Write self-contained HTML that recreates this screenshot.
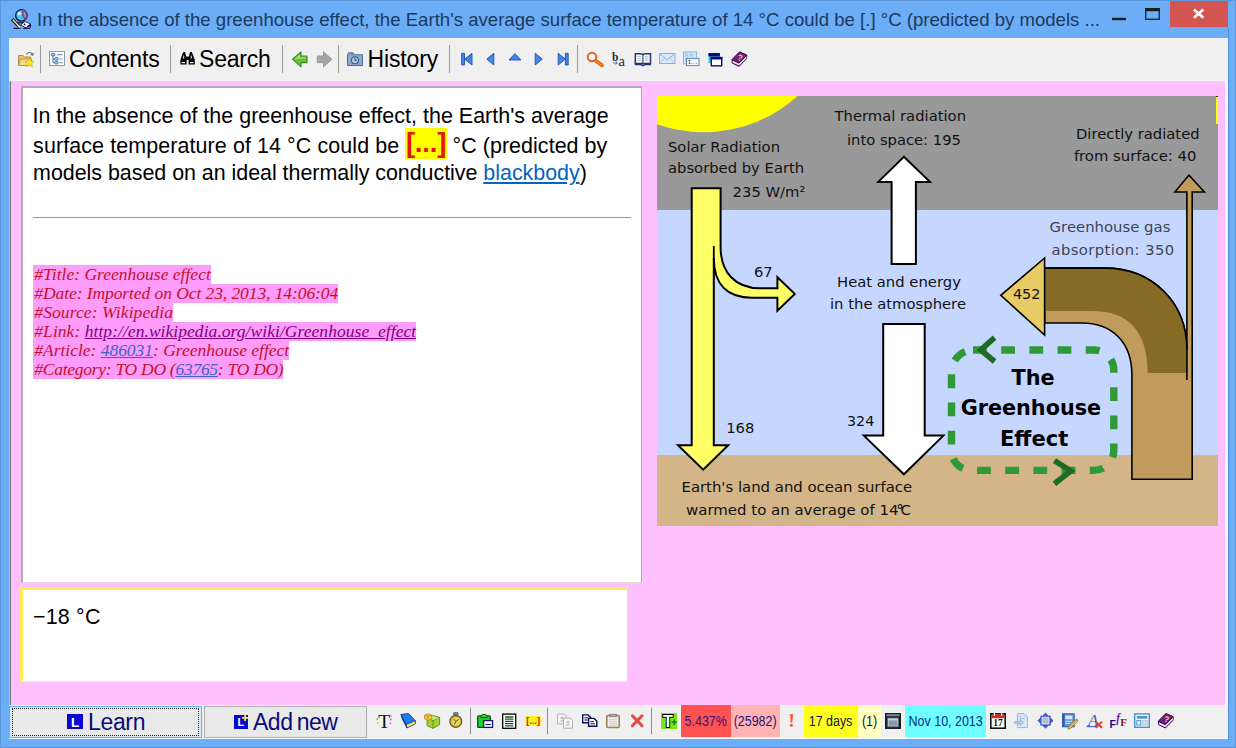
<!DOCTYPE html>
<html lang="en">
<head>
<meta charset="utf-8">
<title>SuperMemo element</title>
<style>
html,body{margin:0;padding:0;}
body{width:1236px;height:748px;overflow:hidden;background:#6badf6;position:relative;font-family:"Liberation Sans",sans-serif;}
.abs{position:absolute;}
#win{left:0;top:0;width:1236px;height:748px;background:#6badf6;box-sizing:border-box;border:1px solid #5a94d6;}
#title{left:37px;top:7.5px;font-size:18.6px;color:#1b3a5e;white-space:nowrap;line-height:24px;}
#tb{left:9px;top:38px;width:1218.5px;height:42px;background:#f0f0f0;}
#tbline{left:9px;top:80px;width:1216px;height:2px;background:linear-gradient(#6c6c6c 50%,#a58ba5 50%);}
#client{left:9px;top:80px;width:1218.5px;height:625px;background:#f6f6f6;}
#pink{left:10px;top:81px;width:1214px;height:624px;background:#ffc0ff;border-left:1px solid #7a7a7a;}
#q{left:21px;top:86px;width:620.5px;height:497px;background:#fff;box-sizing:border-box;border:2px solid #b6aab6;border-right:1.5px solid #aaa;border-bottom:0.5px solid #e8d8e8;}
.qt{font-size:21.45px;color:#000;white-space:nowrap;line-height:25px;}
#a{left:20px;top:586.5px;width:607.6px;height:95.5px;background:#fff;box-sizing:border-box;border:3px solid #ffec50;border-right:1.5px solid #ffea40;border-bottom:1px solid #fff3a0;}
.meta{left:33px;padding-left:1.3px;height:19px;line-height:19px;font-family:"Liberation Serif",serif;font-style:italic;font-size:17.5px;color:#c4102e;background:#fe9cfb;white-space:nowrap;}
.meta a{color:#3b62c8;text-decoration:underline;}
.meta a.v{color:#800080;}
#bb{left:9px;top:705px;width:1218.5px;height:34px;background:#f0f0f0;border-top:1px solid #f9eef9;border-bottom:1px solid #fbfbfb;box-sizing:border-box;}
.btn{top:706px;height:32px;box-sizing:border-box;background:#e8e8e8;border:1px solid #acacac;color:#10106a;font-size:23.5px;line-height:30px;white-space:nowrap;}
.tbt{top:45px;font-size:23px;line-height:28px;color:#000;white-space:nowrap;}
.sep{width:1px;background:#9a9a9a;}
.st{top:705px;height:32px;line-height:32px;font-size:14px;white-space:nowrap;text-align:center;overflow:hidden;}
.st span{display:inline-block;transform:scaleX(0.89);transform-origin:50% 50%;margin:0 -8px;}
.bt{top:707.5px;font-size:23px;line-height:28px;color:#0c0c78;white-space:nowrap;}
</style>
</head>
<body>
<div id="win" class="abs"></div>
<div class="abs" style="left:1227.5px;top:28px;width:1.5px;height:712px;background:#4f8fdc;"></div>
<div id="title" class="abs">In the absence of the greenhouse effect, the Earth's average surface temperature of 14 °C could be [.] °C (predicted by models ...</div>

<!-- caption buttons -->
<svg class="abs" style="left:0;top:0;" width="1236" height="38" viewBox="0 0 1236 38">
<rect x="1112" y="17.8" width="14" height="2.4" fill="#1c1c1c"/>
<rect x="1145.7" y="9.5" width="13.6" height="9.8" fill="none" stroke="#1c2a3a" stroke-width="1.4"/>
<rect x="1145" y="8" width="15" height="3.2" fill="#1c1c1c"/>
<rect x="1170" y="1" width="58" height="26" fill="#d35450"/>
<path d="M1193.9,9.4 L1203.3,17.8 M1203.3,9.4 L1193.9,17.8" stroke="#fff" stroke-width="2.7" fill="none"/>
<!-- app icon -->
<g>
<circle cx="21.4" cy="15.4" r="5.7" fill="#46c8ec" stroke="#10103a" stroke-width="1.3"/>
<path d="M22.4,9.8 A5.7,5.7 0 0 1 25,20 Q20.6,16.6 22.4,9.8Z" fill="#7a4a96"/>
<path d="M23.8,11 Q27,14.2 25.4,18.2 Q23,15.8 23.8,11Z" fill="#86a89c"/>
<circle cx="19.2" cy="13.6" r="1.7" fill="#d8f6ff"/>
<path d="M17.6,21.4 Q20.6,23.2 24.4,21.2 L25,23.4 H18 Z" fill="#1a1460"/>
<path d="M12.2,19.2 L19.6,27.2" stroke="#0c0c20" stroke-width="3.4"/>
<path d="M12.8,19.6 L18.6,25.9" stroke="#e8e060" stroke-width="1.5"/>
<path d="M18.2,25.6 L20.2,27.6" stroke="#fff" stroke-width="1.6"/>
<path d="M20.5,25 L24.8,21.6 L30.6,24 L26,27.8 Z" fill="#fff" stroke="#14143c" stroke-width="0.8"/>
<circle cx="24.6" cy="24.4" r="0.9" fill="#14143c"/>
<path d="M13.6,28.4 H20.6 M23.4,28.4 H30 M27.4,26.6 L30.4,24.8 V27.4" stroke="#10105a" stroke-width="1.3" fill="none"/>
</g>
</svg>

<div id="tb" class="abs"></div>
<div id="tbline" class="abs"></div>
<div id="client" class="abs"></div>
<div id="pink" class="abs"></div>
<div class="abs" style="left:9px;top:81.5px;width:1px;height:623.5px;background:#a9bed8;"></div>

<!-- toolbar text -->
<div class="abs tbt" style="left:69px;letter-spacing:-0.2px;">Contents</div>
<div class="abs tbt" style="left:199px;letter-spacing:-0.2px;">Search</div>
<div class="abs tbt" style="left:367.6px;letter-spacing:-0.17px;">History</div>
<svg class="abs" style="left:0;top:38px;" width="1236" height="43" viewBox="0 38 1236 43">
<g stroke="#9c9c9c" stroke-width="1">
<path d="M40.5,45 V73 M170.5,45 V73 M282.5,45 V73 M338.5,45 V73 M449.5,45 V73 M577.5,45 V73"/>
</g>
<!-- folder with star -->
<g transform="translate(18,51)">
<path d="M8.5,3.5 C9.5,1 13,0.8 14.5,3.2" fill="none" stroke="#707070" stroke-width="1.2"/>
<path d="M15.6,1.6 L15.2,5 L12.2,3.8 Z" fill="#707070"/>
<path d="M0.5,4.5 H5 L6.5,6 H12.5 V14.5 H0.5 Z" fill="#e9c767" stroke="#b08f36" stroke-width="1"/>
<path d="M2.5,8 H14 L11.5,14.5 H0.5 Z" fill="#f3d987" stroke="#b08f36" stroke-width="0.8"/>
<path d="M11.5,7.2 L12.9,10.2 L16,10.5 L13.7,12.6 L14.4,15.8 L11.5,14.1 L8.6,15.8 L9.3,12.6 L7,10.5 L10.1,10.2 Z" fill="#ffe81c" stroke="#c9a61a" stroke-width="0.6"/>
</g>
<!-- contents icon -->
<g transform="translate(49,51)">
<rect x="0.5" y="0.5" width="15" height="14" fill="#fbfcfe" stroke="#8c9bb4"/>
<path d="M4,4.5 V11.5 H7 M4,8 H7" fill="none" stroke="#5c6f8e" stroke-width="1"/>
<rect x="2" y="2.3" width="4" height="2.6" rx="1" fill="#9cc4f2" stroke="#3f6fb6" stroke-width="0.8"/>
<rect x="5.6" y="6.6" width="3.6" height="2.6" rx="1" fill="#9cc4f2" stroke="#3f6fb6" stroke-width="0.8"/>
<rect x="5.6" y="10.3" width="3.6" height="2.6" rx="1" fill="#9cc4f2" stroke="#3f6fb6" stroke-width="0.8"/>
<path d="M8,3.6 H13.5 M10.5,8 H13.5 M10.5,11.6 H13.5" stroke="#8d99ac" stroke-width="1.1"/>
</g>
<!-- binoculars -->
<g transform="translate(180,52)" fill="#000">
<path d="M2.6,1.2 H5.6 V3 L6.6,5 V12.6 H0.4 V8 Z"/>
<path d="M9.4,1.2 H12.4 L14.8,8 V12.6 H8.6 V5 L9.4,3 Z"/>
<rect x="6" y="4.6" width="3.2" height="3.4"/>
<rect x="3.2" y="0" width="2" height="1.6"/><rect x="10" y="0" width="2" height="1.6"/>
<rect x="1.6" y="10" width="3.4" height="1.2" fill="#fff"/><rect x="10" y="10" width="3.4" height="1.2" fill="#fff"/>
<rect x="3.2" y="3.6" width="0.9" height="3" fill="#fff"/><rect x="10.8" y="3.6" width="0.9" height="3" fill="#fff"/>
</g>
<!-- green back arrow -->
<path d="M292.5,59.2 L301,51.8 V56 H307 V62.6 H301 V66.8 Z" fill="#6cbf3c" stroke="#3f8a22" stroke-width="1.1" stroke-linejoin="round"/>
<path d="M294.6,59 L300,54.3 V57.3 H306 V58.6 H299 Z" fill="#a8de7c"/>
<!-- gray fwd arrow -->
<path d="M332,59.2 L323.5,51.8 V56 H317.3 V62.6 H323.5 V66.8 Z" fill="#a6a6a6" stroke="#979797" stroke-width="1" stroke-linejoin="round"/>
<!-- history icon -->
<g transform="translate(347,52)">
<path d="M0.5,2.8 L1.6,0.8 H6 L7,2.8 H15.5 V13.5 H0.5 Z" fill="#7d9cc0" stroke="#4d6e96" stroke-width="1"/>
<rect x="1.2" y="3.6" width="13.6" height="9.2" fill="#8dacd0"/>
<circle cx="8" cy="8.2" r="3.5" fill="#b5cde8" stroke="#3c5a80" stroke-width="1.1"/>
<path d="M8,6 V8.4 H10" fill="none" stroke="#2d4566" stroke-width="1"/>
</g>
<!-- nav icons -->
<g fill="#4486ea" stroke="#1f4fb0" stroke-width="0.9" stroke-linejoin="round">
<path d="M472,53.3 V65 L464.6,59.1 Z"/><rect x="461.7" y="53.3" width="2.8" height="11.7"/>
<path d="M493.8,53.3 V65 L486.8,59.1 Z"/>
<path d="M509,60 L514.9,53.6 L521,60 Z"/>
<path d="M535.2,53.3 V65 L542.3,59.1 Z"/>
<path d="M558.2,53.3 V65 L565.4,59.1 Z"/><rect x="565.4" y="53.3" width="2.8" height="11.7"/>
</g>
<!-- magnifier -->
<g>
<path d="M595.2,60.4 L602,65.2" stroke="#c9520c" stroke-width="3.6" stroke-linecap="round"/>
<path d="M595.2,60.4 L602,65.2" stroke="#f58a2e" stroke-width="1.8" stroke-linecap="round"/>
<circle cx="592" cy="57" r="4.3" fill="#e8f4fb" stroke="#e8641a" stroke-width="2"/>
<circle cx="591" cy="56" r="1.6" fill="#fff"/>
</g>
<!-- b->a -->
<g font-family="'Liberation Serif',serif" font-weight="bold" fill="#2b2b2b">
<text x="612" y="60.5" font-size="11.5">b</text>
<text x="618.4" y="65.6" font-size="14.5" font-weight="normal">a</text>
<path d="M613,63 H617 M615.6,61.6 L617.4,63 L615.6,64.4" fill="none" stroke="#2f62c0" stroke-width="0.9"/>
</g>
<!-- open book -->
<g transform="translate(634.5,53)">
<path d="M0.8,0.8 H6 Q8.2,0.8 8.4,2.4 Q8.6,0.8 10.8,0.8 H16 V10.6 H0.8 Z" fill="#f6f8fb" stroke="#22396b" stroke-width="1.5"/>
<path d="M8.4,2.4 V11" stroke="#22396b" stroke-width="1"/>
<path d="M0.4,11.6 H6.4 L8.4,12.6 L10.4,11.6 H16.4" fill="none" stroke="#22396b" stroke-width="1.5"/>
<path d="M2.8,3.6 H6.4 M2.8,5.6 H6.4 M2.8,7.6 H6.4 M10.4,3.6 H14 M10.4,5.6 H14 M10.4,7.6 H14" stroke="#b4becf" stroke-width="0.9"/>
</g>
<!-- envelope -->
<g transform="translate(659,53)">
<rect x="0.5" y="0.5" width="15.5" height="10" fill="#dbe8fa" stroke="#8eaede"/>
<path d="M0.8,0.8 L8.2,7 L15.7,0.8" fill="none" stroke="#8eaede" stroke-width="1"/>
<path d="M0.8,10.2 L5.6,5.2 M15.7,10.2 L10.9,5.2" stroke="#a9c2e8" stroke-width="0.9"/>
</g>
<!-- template -->
<g transform="translate(683,51.4)">
<rect x="0.5" y="0.5" width="13" height="12" fill="#cfe3f8" stroke="#8fb6e0"/>
<path d="M2,2 h3 v3 h-3z M7,2 h3 v3 h-3z M2,6.5 h3 v3 h-3z" fill="#a8cbf0"/>
<rect x="3.5" y="7" width="12.5" height="7.2" fill="#f2f7fc" stroke="#5f87ad"/>
<text x="5.2" y="12.6" font-family="'Liberation Mono',monospace" font-weight="bold" font-size="6" fill="#333" textLength="9.4" lengthAdjust="spacingAndGlyphs">I...</text>
</g>
<!-- windows -->
<g transform="translate(708.5,53)">
<rect x="0" y="0" width="11.4" height="10" fill="#38c8f0"/>
<rect x="0" y="0" width="11.4" height="3.4" fill="#0a0a78"/>
<rect x="2.8" y="4.6" width="10.4" height="8.2" fill="#fff" stroke="#0a0a78" stroke-width="1.4"/>
<rect x="2.1" y="3.9" width="11.8" height="2.6" fill="#0a0a78"/>
</g>
<!-- purple help book -->
<g transform="translate(731,51)" id="pbook">
<path d="M1,8.5 L8.5,0.8 L15.8,4 L15.6,7.6 L8,15.4 L1.2,12 Z" fill="#6d1f84" stroke="#3d0c4e" stroke-width="1" stroke-linejoin="round"/>
<path d="M1.6,11.6 L8,14.6 L15.4,7.2 L15.4,5.2 L8,12.4 L1.6,9.6 Z" fill="#f1e9f3"/>
<path d="M1.2,9 L8,12 L15.6,4.4" fill="none" stroke="#3d0c4e" stroke-width="0.9"/>
<text x="6.4" y="9.4" font-family="'Liberation Sans',sans-serif" font-weight="bold" font-size="8.5" fill="#ffd21e" transform="rotate(14 8 7)">?</text>
</g>
</svg>


<!-- question -->
<div id="q" class="abs"></div>
<div class="abs qt" style="left:32.4px;top:104px;letter-spacing:0.03px;">In the absence of the greenhouse effect, the Earth's average</div>
<div class="abs qt" style="left:33.1px;top:134px;letter-spacing:0.1px;">surface temperature of 14 °C could be</div>
<div class="abs" style="left:405px;top:128px;width:42px;height:31px;background:#ffff00;color:#e41410;font-weight:bold;font-size:27.5px;line-height:30px;text-align:center;white-space:nowrap;letter-spacing:-0.2px;">[...]</div>
<div class="abs qt" style="left:452.6px;top:134px;letter-spacing:0.05px;">°C (predicted by</div>
<div class="abs qt" style="left:33.1px;top:161px;letter-spacing:-0.03px;">models based on an ideal thermally conductive <a style="color:#0563c1;text-decoration:underline;">blackbody</a>)</div>
<div class="abs" style="left:33px;top:217px;width:598px;height:1px;background:#9a9a9a;"></div>

<div class="abs meta" style="top:265px;letter-spacing:0.01px;">#Title: Greenhouse effect</div>
<div class="abs meta" style="top:284px;letter-spacing:-0.08px;">#Date: Imported on Oct 23, 2013, 14:06:04</div>
<div class="abs meta" style="top:303px;letter-spacing:0.10px;">#Source: Wikipedia</div>
<div class="abs meta" style="top:322px;letter-spacing:0.05px;">#Link: <a class="v">http://en.wikipedia.org/wiki/Greenhouse_effect</a></div>
<div class="abs meta" style="top:341px;letter-spacing:-0.02px;">#Article: <a>486031</a>: Greenhouse effect</div>
<div class="abs meta" style="top:360px;letter-spacing:-0.27px;">#Category: TO DO (<a>63765</a>: TO DO)</div>

<!-- answer -->
<div id="a" class="abs"></div>
<div class="abs qt" style="left:33px;top:605px;letter-spacing:0.2px;">−18 °C</div>

<!-- diagram placeholder -->
<svg id="img" class="abs" style="left:657px;top:96px;" width="561" height="430" viewBox="657 96 561 430" font-family="'DejaVu Sans','Liberation Sans',sans-serif" font-size="14.77">
<rect x="657" y="96" width="561" height="115" fill="#999999"/>
<rect x="657" y="210" width="561" height="246" fill="#c6d7ff"/>
<rect x="657" y="455" width="561" height="71" fill="#d3b587"/>
<circle cx="703.5" cy="-7.7" r="140" fill="#ffff00"/>
<rect x="1216" y="96" width="2" height="28" fill="#ffff00"/><rect x="1216" y="96" width="2" height="1" fill="#222"/>
<!-- solar arrow -->
<path d="M691.7,188.3 H720.6 V247 C720.6,272 735,288.3 760,288.3 H777.4 V277.2 L794.8,293.9 L777.4,310.7 V297.7 H752 C728,297.7 713.8,285 713.8,258 V445.2 H728.2 L703.2,469.7 L678,445.2 H691.7 Z" fill="#ffff66" stroke="#000" stroke-width="2" stroke-linejoin="miter"/>
<path d="M713.8,246 V260" fill="none" stroke="#000" stroke-width="1.8"/>
<!-- white arrows -->
<path d="M903.9,156.8 L930,181.9 H915.9 V264.1 H891.6 V181.9 H878.2 Z" fill="#fff" stroke="#000" stroke-width="2"/>
<path d="M883.2,323.9 H924.7 V435.6 H943.4 L903.9,474.3 L863.8,435.6 H883.2 Z" fill="#fff" stroke="#000" stroke-width="2"/>
<!-- pipe -->
<path d="M1044.6,268.1 H1105 C1152,268.1 1186.9,302 1186.9,350 V192 H1174.9 L1189,175.1 L1204.4,192 H1192.2 V479.2 H1131.9 V375 C1131.9,343 1113,323 1081.5,323 H1044.6 Z" fill="#c19b5c" stroke="#000" stroke-width="1.6"/>
<path d="M1044.6,268.1 H1105 C1152,268.1 1186.9,302 1186.9,350 V372.9 H1147.7 C1147.7,333 1130,311 1092,311 H1044.6 Z" fill="#876a25"/>
<path d="M1044.6,268.1 H1105 C1152,268.1 1186.9,302 1186.9,350 V380" fill="none" stroke="#000" stroke-width="1.6"/>
<path d="M1044.6,258 L1000.8,295.3 L1044.6,335 Z" fill="#e9cb66" stroke="#000" stroke-width="1.6"/>
<!-- green loop -->
<path d="M973,350 H1093.8 A20,20 0 0 1 1113.8,370 V450.4 A20,20 0 0 1 1093.8,470.4 H971.5 A20,20 0 0 1 951.5,450.4 V372 A22,22 0 0 1 973.5,350" fill="none" stroke="#2f9a35" stroke-width="7.4" stroke-dasharray="13.8 14.4"/>
<path d="M994.6,337.7 L980.7,350 L994.6,361.5" fill="none" stroke="#1f6a24" stroke-width="5.6"/>
<path d="M1054.5,460.7 L1070.7,471 L1054.5,483.8" fill="none" stroke="#1f6a24" stroke-width="5.6"/>
<!-- labels -->
<g fill="#111">
<text x="668" y="152.2" textLength="112" lengthAdjust="spacingAndGlyphs">Solar Radiation</text>
<text x="668" y="173.2">absorbed by Earth</text>
<text x="732.6" y="197.3">235 W/m²</text>
<text x="834.5" y="120.7" textLength="131.5" lengthAdjust="spacingAndGlyphs">Thermal radiation</text>
<text x="847" y="144.6" textLength="113.9" lengthAdjust="spacingAndGlyphs">into space: 195</text>
<text x="1076" y="139" textLength="123.6" lengthAdjust="spacingAndGlyphs">Directly radiated</text>
<text x="1073.9" y="161.4" textLength="122.5" lengthAdjust="spacingAndGlyphs">from surface: 40</text>
<text x="837" y="286.6" textLength="123.9" lengthAdjust="spacingAndGlyphs">Heat and energy</text>
<text x="830" y="309.2" textLength="136" lengthAdjust="spacingAndGlyphs">in the atmosphere</text>
<text x="753.9" y="277.2">67</text>
<text x="726.2" y="432.6">168</text>
<text x="847" y="425.7" font-size="14.3">324</text>
<text x="1012.9" y="299.4" font-size="14.4">452</text>
<text x="681.5" y="492.1" textLength="230.6" lengthAdjust="spacingAndGlyphs">Earth's land and ocean surface</text>
<text x="686" y="514.9" textLength="225" lengthAdjust="spacingAndGlyphs">warmed to an average of 14<tspan dx="-2.2">°</tspan><tspan dx="-3.2">C</tspan></text>
</g>
<g fill="#3d4353">
<text x="1049.6" y="232" textLength="120.8" lengthAdjust="spacingAndGlyphs">Greenhouse gas</text>
<text x="1051.4" y="254.9" textLength="122.8" lengthAdjust="spacing">absorption: 350</text>
</g>
<g fill="#000" font-weight="bold" font-size="20.8">
<text x="1011.5" y="385">The</text>
<text x="960.7" y="415" textLength="140.4" lengthAdjust="spacingAndGlyphs">Greenhouse</text>
<text x="1000" y="446" textLength="68.2" lengthAdjust="spacingAndGlyphs">Effect</text>
</g>
</svg>

<!-- bottom bar -->
<div id="bb" class="abs"></div>
<div class="abs" style="left:9px;top:706px;width:193px;height:32px;box-sizing:border-box;border:1px solid #5fb0f2;background:#e9e9e9;box-shadow:inset 0 0 0 1px #d8ecfb;"></div>
<div class="abs" style="left:12px;top:708px;width:187px;height:28px;box-sizing:border-box;border:1px dotted #222;"></div>
<div class="abs" style="left:204px;top:706px;width:163px;height:32px;box-sizing:border-box;border:1px solid #acacac;background:#e9e9e9;"></div>
<div class="abs bt" style="left:88px;letter-spacing:-0.34px;">Learn</div>
<div class="abs bt" style="left:253px;letter-spacing:-0.5px;word-spacing:-1.6px;">Add new</div>

<div class="abs st" style="left:681px;width:50px;background:#ff5252;color:#3a1478;"><span>5.437%</span></div>
<div class="abs st" style="left:731px;width:49px;background:#ffb3b3;color:#23147a;"><span>(25982)</span></div>
<div class="abs st" style="left:804px;width:54px;background:#ffff1e;color:#14143c;"><span>17 days</span></div>
<div class="abs st" style="left:858px;width:23px;background:#ffffc0;color:#14143c;"><span>(1)</span></div>
<div class="abs st" style="left:905px;width:81px;background:#70ffff;color:#0a2a8a;"><span>Nov 10, 2013</span></div>

<svg class="abs" style="left:0;top:705px;" width="1236" height="34" viewBox="0 705 1236 34">
<g stroke="#8f8f8f" stroke-width="1"><path d="M470.5,707.5 V734.5 M547.5,707.5 V734.5 M651.5,707.5 V734.5"/></g>
<!-- L icon -->
<rect x="67" y="714" width="16" height="15" fill="#0808d2"/>
<text x="71" y="726.6" font-family="'Liberation Sans',sans-serif" font-weight="bold" font-size="13.5" fill="#fff">L</text>
<!-- L+ icon -->
<rect x="234" y="715" width="14" height="14" fill="#0808d2"/>
<text x="237.6" y="726.4" font-family="'Liberation Sans',sans-serif" font-weight="bold" font-size="11" fill="#fff">L</text>
<path d="M242,717.8 H248.4 M245.2,714.6 V721" stroke="#ffee22" stroke-width="1.8"/>
<!-- T sparkle -->
<text x="378.2" y="727.6" font-family="'Liberation Serif',serif" font-size="19" fill="#111" textLength="12" lengthAdjust="spacingAndGlyphs">T</text>
<g><circle cx="377.3" cy="719" r="1" fill="#58c058"/><circle cx="377.8" cy="723.2" r="0.9" fill="#e8c840"/><circle cx="378.6" cy="715.6" r="0.8" fill="#58c058"/><circle cx="390.8" cy="719.4" r="1" fill="#e060b0"/><circle cx="390.4" cy="723.4" r="0.9" fill="#e060b0"/><circle cx="391" cy="715.8" r="0.8" fill="#e060b0"/></g>
<!-- blue book -->
<g transform="translate(400,713)">
<path d="M1,1.6 L8.4,0.4 L15.4,7.8 L6,11.4 Z" fill="#1f7cf0" stroke="#0c3f9c" stroke-width="0.9" stroke-linejoin="round"/>
<path d="M6,11.4 L15.4,7.8 L15.6,10.8 L7,15 Z" fill="#f6e05a" stroke="#0c3f9c" stroke-width="0.8" stroke-linejoin="round"/>
<path d="M1,1.6 L6,11.4 L7,15 L2.4,6.4 Z" fill="#1558c6" stroke="#0c3f9c" stroke-width="0.8" stroke-linejoin="round"/>
</g>
<!-- green cube -->
<g transform="translate(424,713)">
<path d="M3,5 L9.4,2.4 L15.6,4.6 V11.6 L9,15.4 L3,12.6 Z" fill="#9fd038" stroke="#5e8a1a" stroke-width="0.9" stroke-linejoin="round"/>
<path d="M3,5 L9,7.6 L15.6,4.6 M9,7.6 V15.4" fill="none" stroke="#5e8a1a" stroke-width="0.9"/>
<path d="M9.6,3 L15,5 L9.2,7 L4,5 Z" fill="#c4e868"/>
<path d="M0.6,2.2 L4.2,0.8 L7.6,2 V5.8 L4,7.6 L0.6,6 Z" fill="#f0c848" stroke="#b08a20" stroke-width="0.8" stroke-linejoin="round"/>
<path d="M0.6,2.2 L4,3.6 L7.6,2 M4,3.6 V7.6" fill="none" stroke="#b08a20" stroke-width="0.7"/>
</g>
<!-- stopwatch -->
<g>
<rect x="453.4" y="712.6" width="4.8" height="2.4" rx="1" fill="#8a8a98" stroke="#44444e" stroke-width="0.7"/>
<circle cx="455.8" cy="721.4" r="5.9" fill="#dcc040" stroke="#6e5c18" stroke-width="1.3"/>
<circle cx="455.8" cy="721.4" r="3.9" fill="#e8d468"/>
<path d="M453.4,718.6 L455.8,721.6 L458.6,719.4 M455.8,721.6 L454.6,724.4" fill="none" stroke="#5a4a10" stroke-width="0.9"/>
</g>
<!-- green clipboard -->
<g transform="translate(477,714)">
<rect x="0.7" y="1.8" width="12.6" height="11.6" rx="1" fill="#1fd42c" stroke="#0c4a12" stroke-width="1.3"/>
<path d="M4,2.4 Q4,0.4 7,0.4 Q10,0.4 10,2.4 V3.6 H4 Z" fill="#36e044" stroke="#0c4a12" stroke-width="1"/>
<rect x="6.6" y="6.6" width="9" height="6.8" fill="#fff" stroke="#141478" stroke-width="1.3"/>
<path d="M8.2,10.6 H14" stroke="#141478" stroke-width="1"/>
</g>
<!-- text lines -->
<g transform="translate(502,713.4)">
<rect x="0.7" y="0.7" width="13" height="14.2" fill="#fff" stroke="#000" stroke-width="1.3"/>
<path d="M3,3.6 H11.4 M3,5.8 H11.4 M3,8 H11.4 M3,10.2 H11.4 M3,12.4 H11.4" stroke="#1c5a20" stroke-width="1.3"/>
</g>
<!-- [...] icon -->
<rect x="525.4" y="716" width="15.4" height="9.8" fill="#ffee22"/>
<text x="526.2" y="723.6" font-family="'Liberation Sans',sans-serif" font-weight="bold" font-size="9" fill="#e02010" textLength="13.8" lengthAdjust="spacingAndGlyphs">[...]</text>
<!-- gray docs -->
<g transform="translate(557,713.4)">
<path d="M0.5,0.5 H7 L9.5,3 V10.5 H0.5 Z" fill="#f2f2f2" stroke="#b8b8b8"/>
<path d="M6.5,4.5 H13 L15.5,7 V14.8 H6.5 Z" fill="#f6f6f6" stroke="#b0b0b0"/>
<circle cx="5" cy="4.6" r="1.3" fill="#b4bccc"/><path d="M3,8 Q5,5.4 7,8Z" fill="#b4bccc"/>
<circle cx="11" cy="8.6" r="1.3" fill="#b4bccc"/><path d="M9,12 Q11,9.4 13,12Z" fill="#b4bccc"/>
</g>
<!-- copy -->
<g transform="translate(582,714.2)">
<path d="M0.7,0.7 H6 L8.6,3.2 V8.6 H0.7 Z" fill="#fff" stroke="#0c0c50" stroke-width="1.4"/>
<path d="M2.4,3.6 H6 M2.4,5.8 H6.6" stroke="#0c0c50" stroke-width="1"/>
<path d="M6.6,4.2 H12 L14.8,6.8 V12 H6.6 Z" fill="#fff" stroke="#0c0c50" stroke-width="1.4"/>
<path d="M8.4,7.4 H12 M8.4,9.6 H13" stroke="#0c0c50" stroke-width="1"/>
</g>
<!-- paste clipboard -->
<g transform="translate(606,713.8)">
<rect x="0.8" y="1.6" width="12.4" height="12" rx="1" fill="#f4efe4" stroke="#9a7c4c" stroke-width="1.5"/>
<rect x="3.8" y="0.4" width="6.4" height="2.6" fill="#a8a8a8" stroke="#77705c" stroke-width="0.7"/>
<path d="M3,5.6 H11 M3,7.6 H11 M3,9.6 H11 M3,11.6 H11" stroke="#b8cce8" stroke-width="0.9"/>
</g>
<!-- red X -->
<path d="M632.4,715.8 L642,725.8 M642,715.8 L632.4,725.8" stroke="#ea4646" stroke-width="3" stroke-linecap="round"/>
<!-- T+ green -->
<rect x="661" y="713" width="16" height="16" fill="#7ee418"/>
<text x="663" y="727" font-family="'Liberation Sans',sans-serif" font-weight="bold" font-size="16" fill="#fff" stroke="#000" stroke-width="2" paint-order="stroke">T</text>
<path d="M671.4,722 H677 M674.2,719.2 V724.8" stroke="#0d8a1c" stroke-width="1.7"/>
<!-- ! -->
<path d="M789.6,714.4 Q791.4,713.6 793.2,714.4 L792.2,722.4 H790.6 Z" fill="#f0522a"/>
<circle cx="791.4" cy="725.2" r="1.5" fill="#f0522a"/>
<path d="M790.4,715 L790.9,721" stroke="#ffb08a" stroke-width="0.7"/>
<!-- dark window -->
<g transform="translate(885,713)">
<rect x="0" y="0" width="16" height="16" fill="#16202c"/>
<rect x="1.4" y="1.2" width="13.2" height="2" fill="#7a8694"/>
<rect x="2.6" y="5" width="10.8" height="8.8" fill="#c8d2dc" stroke="#5a6672" stroke-width="0.8"/>
<rect x="3.6" y="7.4" width="8.8" height="5.4" fill="#8c98a6"/>
</g>
<!-- calendar -->
<g transform="translate(990,713)">
<rect x="0.8" y="0.8" width="14.4" height="14.4" fill="#fff" stroke="#111" stroke-width="1.6"/>
<rect x="1.6" y="1.6" width="12.8" height="3.6" fill="#d8281e"/>
<path d="M4.4,0 V3 M11.6,0 V3" stroke="#eee" stroke-width="1.2"/>
<text x="3.2" y="13.4" font-family="'Liberation Serif',serif" font-weight="bold" font-size="9.4" fill="#111" textLength="9.6" lengthAdjust="spacingAndGlyphs">17</text>
</g>
<!-- import doc -->
<g transform="translate(1014,713)">
<path d="M3.4,0.6 H10 L13.4,4 V14.6 H3.4 Z" fill="#d8e8fa" stroke="#9ab8e0" stroke-width="1"/>
<path d="M6,2.4 V5.4 H11" fill="none" stroke="#9ab8e0" stroke-width="0.9"/>
<path d="M0.4,8.6 H6 V6.4 L9.6,9.4 L6,12.4 V10.2 H0.4 Z" fill="#c2d8f4" stroke="#86a8d6" stroke-width="0.8"/>
</g>
<!-- blue expand -->
<g transform="translate(1038,713)">
<path d="M7.5,0.2 L10.4,3 H12.2 V4.8 L15,7.6 L12.2,10.4 V12.2 H10.4 L7.5,15 L4.6,12.2 H2.8 V10.4 L0,7.6 L2.8,4.8 V3 H4.6 Z" fill="#3858e4" stroke="#1c2fa0" stroke-width="0.7"/>
<rect x="4" y="4.2" width="7" height="6.8" fill="#b4bec4" stroke="#e8eefc" stroke-width="0.8"/>
</g>
<!-- notebook + pencil -->
<g transform="translate(1062,713.2)">
<rect x="0.6" y="0.6" width="11.6" height="13" fill="#5c98dc" stroke="#2c5ea8" stroke-width="1"/>
<rect x="3.2" y="2.4" width="7.2" height="3.6" fill="#d6e6f8"/>
<path d="M3.2,8 H10 M3.2,10.2 H8.4" stroke="#d6e6f8" stroke-width="1"/>
<rect x="0.6" y="0.6" width="2" height="13" fill="#2c5ea8"/>
<path d="M6.6,13.6 L14.4,5.6 L16.2,7.4 L8.4,15.4 L5.8,16 Z" fill="#f0b83c" stroke="#8a6a2a" stroke-width="0.7"/>
<path d="M14.4,5.6 L16.2,7.4 L15.2,8.4 L13.4,6.6Z" fill="#e07a8a"/>
</g>
<!-- A with x -->
<g>
<text x="1088" y="726" font-family="'Liberation Serif',serif" font-style="italic" font-size="17" fill="#3a58b8">A</text>
<path d="M1086.6,726.6 H1097" stroke="#4a6ad0" stroke-width="1.2"/>
<path d="M1095.6,721.6 L1102,727.8 M1102,721.6 L1095.6,727.8" stroke="#ea3a2a" stroke-width="2"/>
</g>
<!-- F f F -->
<g>
<text x="1109.6" y="728.4" font-family="'Liberation Sans',sans-serif" font-weight="bold" font-size="10.5" fill="#0a0a8a">F</text>
<text x="1116.2" y="722" font-family="'Liberation Serif',serif" font-style="italic" font-weight="bold" font-size="11.5" fill="#7a1a9a">f</text>
<text x="1120.2" y="726.4" font-family="'Liberation Serif',serif" font-weight="bold" font-size="11" fill="#8a1420">F</text>
</g>
<!-- layout icon -->
<g transform="translate(1134,713.2)">
<rect x="0.7" y="0.7" width="14.6" height="13.4" fill="#eaf3fb" stroke="#4a94c8" stroke-width="1.4"/>
<rect x="2.8" y="2.8" width="10.4" height="2.6" fill="#4a94c8"/>
<rect x="2.8" y="7.4" width="4" height="4.4" fill="#eaf3fb" stroke="#4a94c8" stroke-width="1"/>
<rect x="8.8" y="7.4" width="4.4" height="4.4" fill="#d4dfe8" stroke="#a8c0d4" stroke-width="0.8"/>
</g>
<!-- purple book -->
<g transform="translate(1157.4,712.6)">
<path d="M1,8.5 L8.5,0.8 L15.8,4 L15.6,7.6 L8,15.4 L1.2,12 Z" fill="#6d1f84" stroke="#3d0c4e" stroke-width="1" stroke-linejoin="round"/>
<path d="M1.6,11.6 L8,14.6 L15.4,7.2 L15.4,5.2 L8,12.4 L1.6,9.6 Z" fill="#f1e9f3"/>
<path d="M1.2,9 L8,12 L15.6,4.4" fill="none" stroke="#3d0c4e" stroke-width="0.9"/>
<text x="6.4" y="9.4" font-family="'Liberation Sans',sans-serif" font-weight="bold" font-size="8.5" fill="#ffd21e" transform="rotate(14 8 7)">?</text>
</g>
</svg>

</body>
</html>
